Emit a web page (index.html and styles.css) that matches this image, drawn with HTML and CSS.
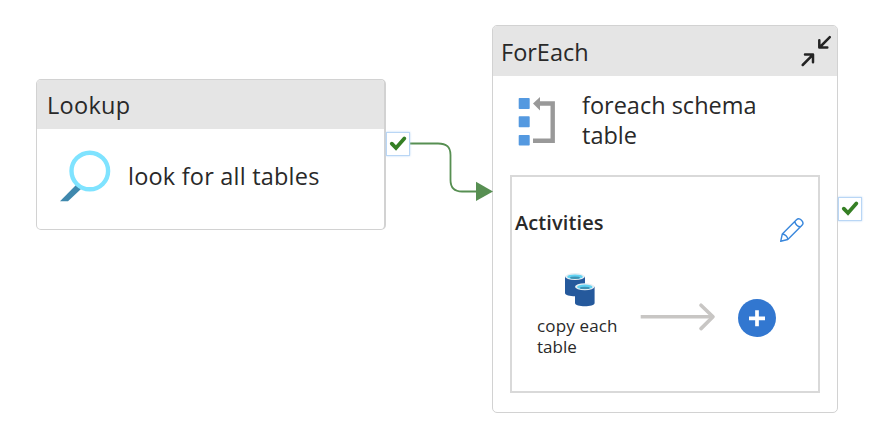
FILE: index.html
```html
<!DOCTYPE html>
<html lang="en">
<head>
<meta charset="utf-8">
<title>Pipeline</title>
<link rel="stylesheet" href="styles.css">
</head>
<body>
<main class="canvas">
  <section class="node lookup">
    <header class="node-head"><span class="t-lookup">Lookup</span></header>
    <div class="node-body">
      <svg class="ico-search" width="52" height="54" viewBox="0 0 52 54">
        <path d="M1 51.300 17.500 34.500 22 39 9 51.300Z" fill="#3f88ad"/>
        <circle cx="30.800" cy="21" r="18.300" fill="#fff" stroke="#7fe3ff" stroke-width="4.400"/>
      </svg>
      <span class="t-look">look for all tables</span>
    </div>
  </section>

  <section class="node foreach">
    <header class="node-head">
      <span class="t-foreach">ForEach</span>
      <svg class="ico-collapse" width="32" height="32" viewBox="0 0 32 32" fill="none" stroke="#242424" stroke-width="2.500" stroke-linecap="round" stroke-linejoin="round">
        <path d="M29.800 2.200 20 12M19.300 5.300v7.200h8M2.700 30 12.500 20.200M5 19.500H13v7.700"/>
      </svg>
    </header>
    <div class="node-title">
      <svg class="ico-loop" width="38" height="50" viewBox="0 0 38 50">
        <g fill="#5499e0"><rect x=".7" y="1" width="11" height="11" rx=".8"/><rect x=".7" y="19.300" width="11" height="11" rx=".8"/><rect x=".7" y="38" width="11" height="10.500" rx=".8"/></g>
        <path d="M15 43.700H34.700V6.500H20" fill="none" stroke="#999" stroke-width="4.400"/>
        <path d="M15 6.500 22 0v13.500Z" fill="#999"/>
      </svg>
      <div class="title-lines"><div class="t-l1">foreach schema</div><div class="t-l2">table</div></div>
    </div>
    <div class="activities">
      <div class="act-head">
        <strong class="t-act">Activities</strong>
        <svg class="ico-edit" width="26" height="26" viewBox="0 0 26 26" fill="none" stroke="#3987dc" stroke-width="1.400" stroke-linejoin="round">
          <path d="M1.700 24.300 3.300 17 17.500 2.800C20.500-.2 26 5.200 23 8.300L8.800 22.500ZM3.300 17C6 17 8.800 20 8.800 22.500M15.900 4.500C16 7 19 10 21.500 9.800"/>
        </svg>
      </div>
      <div class="flow">
        <div class="copy">
          <svg class="ico-copy" width="32" height="35" viewBox="0 0 32 35">
            <path d="M1 4.500V21c0 4.300 20 4.300 20 0V4.500Z" fill="#25599c"/>
            <ellipse cx="11" cy="4.600" rx="10" ry="3.500" fill="#e8eef2"/>
            <ellipse cx="11" cy="4.700" rx="7.800" ry="2.300" fill="#62d3f3"/>
            <ellipse cx="11" cy="5.700" rx="5" ry="1.200" fill="#3f93b4"/>
            <path d="M11 14.800V31c0 4.300 19.600 4.300 19.600 0V14.800Z" fill="#25599c"/>
            <ellipse cx="20.800" cy="14.800" rx="9.800" ry="3.500" fill="#e8eef2"/>
            <ellipse cx="20.800" cy="14.900" rx="7.700" ry="2.300" fill="#62d3f3"/>
            <ellipse cx="20.800" cy="15.900" rx="5" ry="1.200" fill="#3f93b4"/>
          </svg>
          <div class="t-c1">copy each</div>
          <div class="t-c2">table</div>
        </div>
        <svg class="ico-arrow" width="76" height="30" viewBox="0 0 76 30" fill="none" stroke="#c8c6c4" stroke-width="3.600">
          <path d="M.7 14.800H73"/><path d="M61 3.200 73 14.800 61 26.600" stroke-linecap="round" stroke-linejoin="round"/>
        </svg>
        <svg class="ico-add" width="40" height="40" viewBox="0 0 40 40">
          <circle cx="20" cy="20" r="19" fill="#3277d0"/>
          <path d="M20 12.300v16M12 20.300h16" stroke="#fff" stroke-width="3.700"/>
        </svg>
      </div>
    </div>
  </section>

  <svg class="wire" width="110" height="70" viewBox="0 0 110 70">
    <path d="M24 13.500H53C62 13.500 65.500 17 65.500 25V50C65.500 57.500 69 61.500 77 61.500H92" fill="none" stroke="#578f52" stroke-width="1.800"/>
    <path d="M91 51.700 108 61.400 91 71Z" fill="#578f52"/>
  </svg>
  <div class="port port-a"><svg width="18" height="16" viewBox="0 0 18 16"><path d="M2.800 7.600 7 12 15.300 2.500" fill="none" stroke="#357f24" stroke-width="3.700" stroke-linecap="round"/></svg></div>
  <div class="port port-b"><svg width="18" height="16" viewBox="0 0 18 16"><path d="M2.800 7.600 7 12 15.300 2.500" fill="none" stroke="#357f24" stroke-width="3.700" stroke-linecap="round"/></svg></div>
</main>
</body>
</html>
```
FILE: styles.css
```css
* { box-sizing: border-box; }
body { margin: 0; background: #fff; color: #292929; font-family: "Open Sans", "Noto Sans", sans-serif; }
.canvas { position: relative; width: 894px; height: 446px; overflow: hidden; }
.node { position: absolute; background: #fff; border: 1px solid #d2d2d2; border-radius: 5px; overflow: hidden; white-space: nowrap; font-size: 23.500px; }
.lookup { left: 36px; top: 79px; width: 350px; height: 151px; border-width: 1px 2px 1px 1px; }
.foreach { left: 492px; top: 25px; width: 346px; height: 388px; }
.node-head { display: flex; justify-content: space-between; height: 50px; background: #e5e5e5; line-height: 52px; padding-left: 10px; }
.lookup .node-head { height: 49px; line-height: 50px; }
.t-lookup { letter-spacing: .3px; }
.foreach .node-head { padding: 0 5px 0 8px; line-height: 53px; }
.ico-collapse { margin-top: 9px; }
.node-body { display: flex; align-items: center; height: 93px; padding-left: 22px; }
.ico-search { margin-top: 2px; }
.t-look { margin: 1px 0 0 17px; letter-spacing: .21px; }
.node-title { display: flex; height: 99px; padding: 21px 0 0 25px; }
.title-lines { margin: -8px 0 0 26px; line-height: 30px; padding-top: 1px; }
.activities { width: 310px; height: 218px; margin-left: 17px; border: 2px solid #d9d9d9; }
.act-head { display: flex; justify-content: space-between; height: 80px; padding: 32px 13px 0 3px; font-size: 20px; line-height: 27px; }
.t-act { font-weight: 600; letter-spacing: .1px; }
.ico-edit { margin-top: 8px; }
.flow { display: flex; padding-left: 25px; }
.copy { width: 103px; font-size: 17px; line-height: 21px; }
.t-c1 { letter-spacing: .15px; }
.ico-copy { display: block; margin: 15px 0 8px 27px; }
.ico-arrow { margin-top: 45px; }
.ico-add { margin: 41px 0 0 21px; }
.wire { position: absolute; left: 385px; top: 130px; overflow: visible; }
.port { position: absolute; width: 24px; height: 24px; background: #fff; border: 1px solid #b9d6f5; box-shadow: 0 0 2px #b9d6f5; display: flex; align-items: center; justify-content: center; }
.port-a { left: 386px; top: 132px; }
.port-b { left: 838px; top: 197px; }
```
